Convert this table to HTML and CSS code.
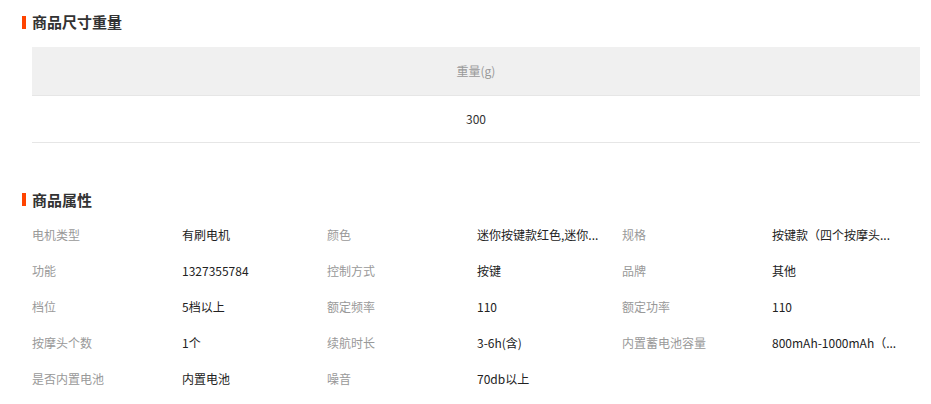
FILE: index.html
```html
<!DOCTYPE html>
<html lang="zh-CN">
<head>
<meta charset="utf-8">
<title>商品信息</title>
<link rel="stylesheet" href="styles.css">
</head>
<body>
<div class="page">
  <h2 class="sec-title">商品尺寸重量</h2>
  <table class="size-table">
    <thead><tr><th>重量(g)</th></tr></thead>
    <tbody><tr><td>300</td></tr></tbody>
  </table>

  <h2 class="sec-title sec-title-2">商品属性</h2>
  <div class="attrs">
    <div class="attr"><span class="k">电机类型</span><span class="v">有刷电机</span></div>
    <div class="attr"><span class="k">颜色</span><span class="v">迷你按键款红色,迷你...</span></div>
    <div class="attr"><span class="k">规格</span><span class="v">按键款（四个按摩头...</span></div>
    <div class="attr"><span class="k">功能</span><span class="v">1327355784</span></div>
    <div class="attr"><span class="k">控制方式</span><span class="v">按键</span></div>
    <div class="attr"><span class="k">品牌</span><span class="v">其他</span></div>
    <div class="attr"><span class="k">档位</span><span class="v">5档以上</span></div>
    <div class="attr"><span class="k">额定频率</span><span class="v">110</span></div>
    <div class="attr"><span class="k">额定功率</span><span class="v">110</span></div>
    <div class="attr"><span class="k">按摩头个数</span><span class="v">1个</span></div>
    <div class="attr"><span class="k">续航时长</span><span class="v">3-6h(含)</span></div>
    <div class="attr"><span class="k">内置蓄电池容量</span><span class="v">800mAh-1000mAh（...</span></div>
    <div class="attr"><span class="k">是否内置电池</span><span class="v">内置电池</span></div>
    <div class="attr"><span class="k">噪音</span><span class="v">70db以上</span></div>
  </div>
</div>
</body>
</html>
```

FILE: styles.css
```css
* { box-sizing: border-box; }
html, body { margin: 0; padding: 0; background: #fff; }
body {
  font-family: "Noto Sans CJK SC", "Noto Sans", sans-serif;
  font-size: 12px;
  color: #333;
}
.page {
  width: 931px;
  padding: 12px 11px 0 22px;
}
.sec-title {
  display: flex;
  align-items: center;
  height: 20px;
  margin: 0;
  font-size: 15px;
  font-weight: bold;
  color: #333;
  line-height: 20px;
}
.sec-title::before {
  content: "";
  display: block;
  width: 4px;
  height: 13px;
  background: #ff4400;
  margin-right: 6px;
}
.sec-title-2 { margin-top: 47px; }

.size-table {
  margin: 15px 0 0 10px;
  width: 888px;
  border-collapse: collapse;
}
.size-table th {
  height: 48px;
  background: #f0f0f0;
  color: #999;
  font-weight: normal;
  text-align: center;
  border-bottom: 1px solid #e6e6e6;
  padding: 0;
}
.size-table td {
  height: 47px;
  text-align: center;
  color: #333;
  border-bottom: 1px solid #e6e6e6;
  padding: 0;
}

.attrs {
  margin: 7px 0 0 10px;
  width: 888px;
  display: grid;
  grid-template-columns: 295px 295px 298px;
}
.attr {
  display: flex;
  height: 36px;
  align-items: center;
}
.attr .k {
  width: 150px;
  flex: none;
  color: #999;
  white-space: nowrap;
}
.attr .v {
  flex: 1;
  color: #222;
  white-space: nowrap;
}
```
